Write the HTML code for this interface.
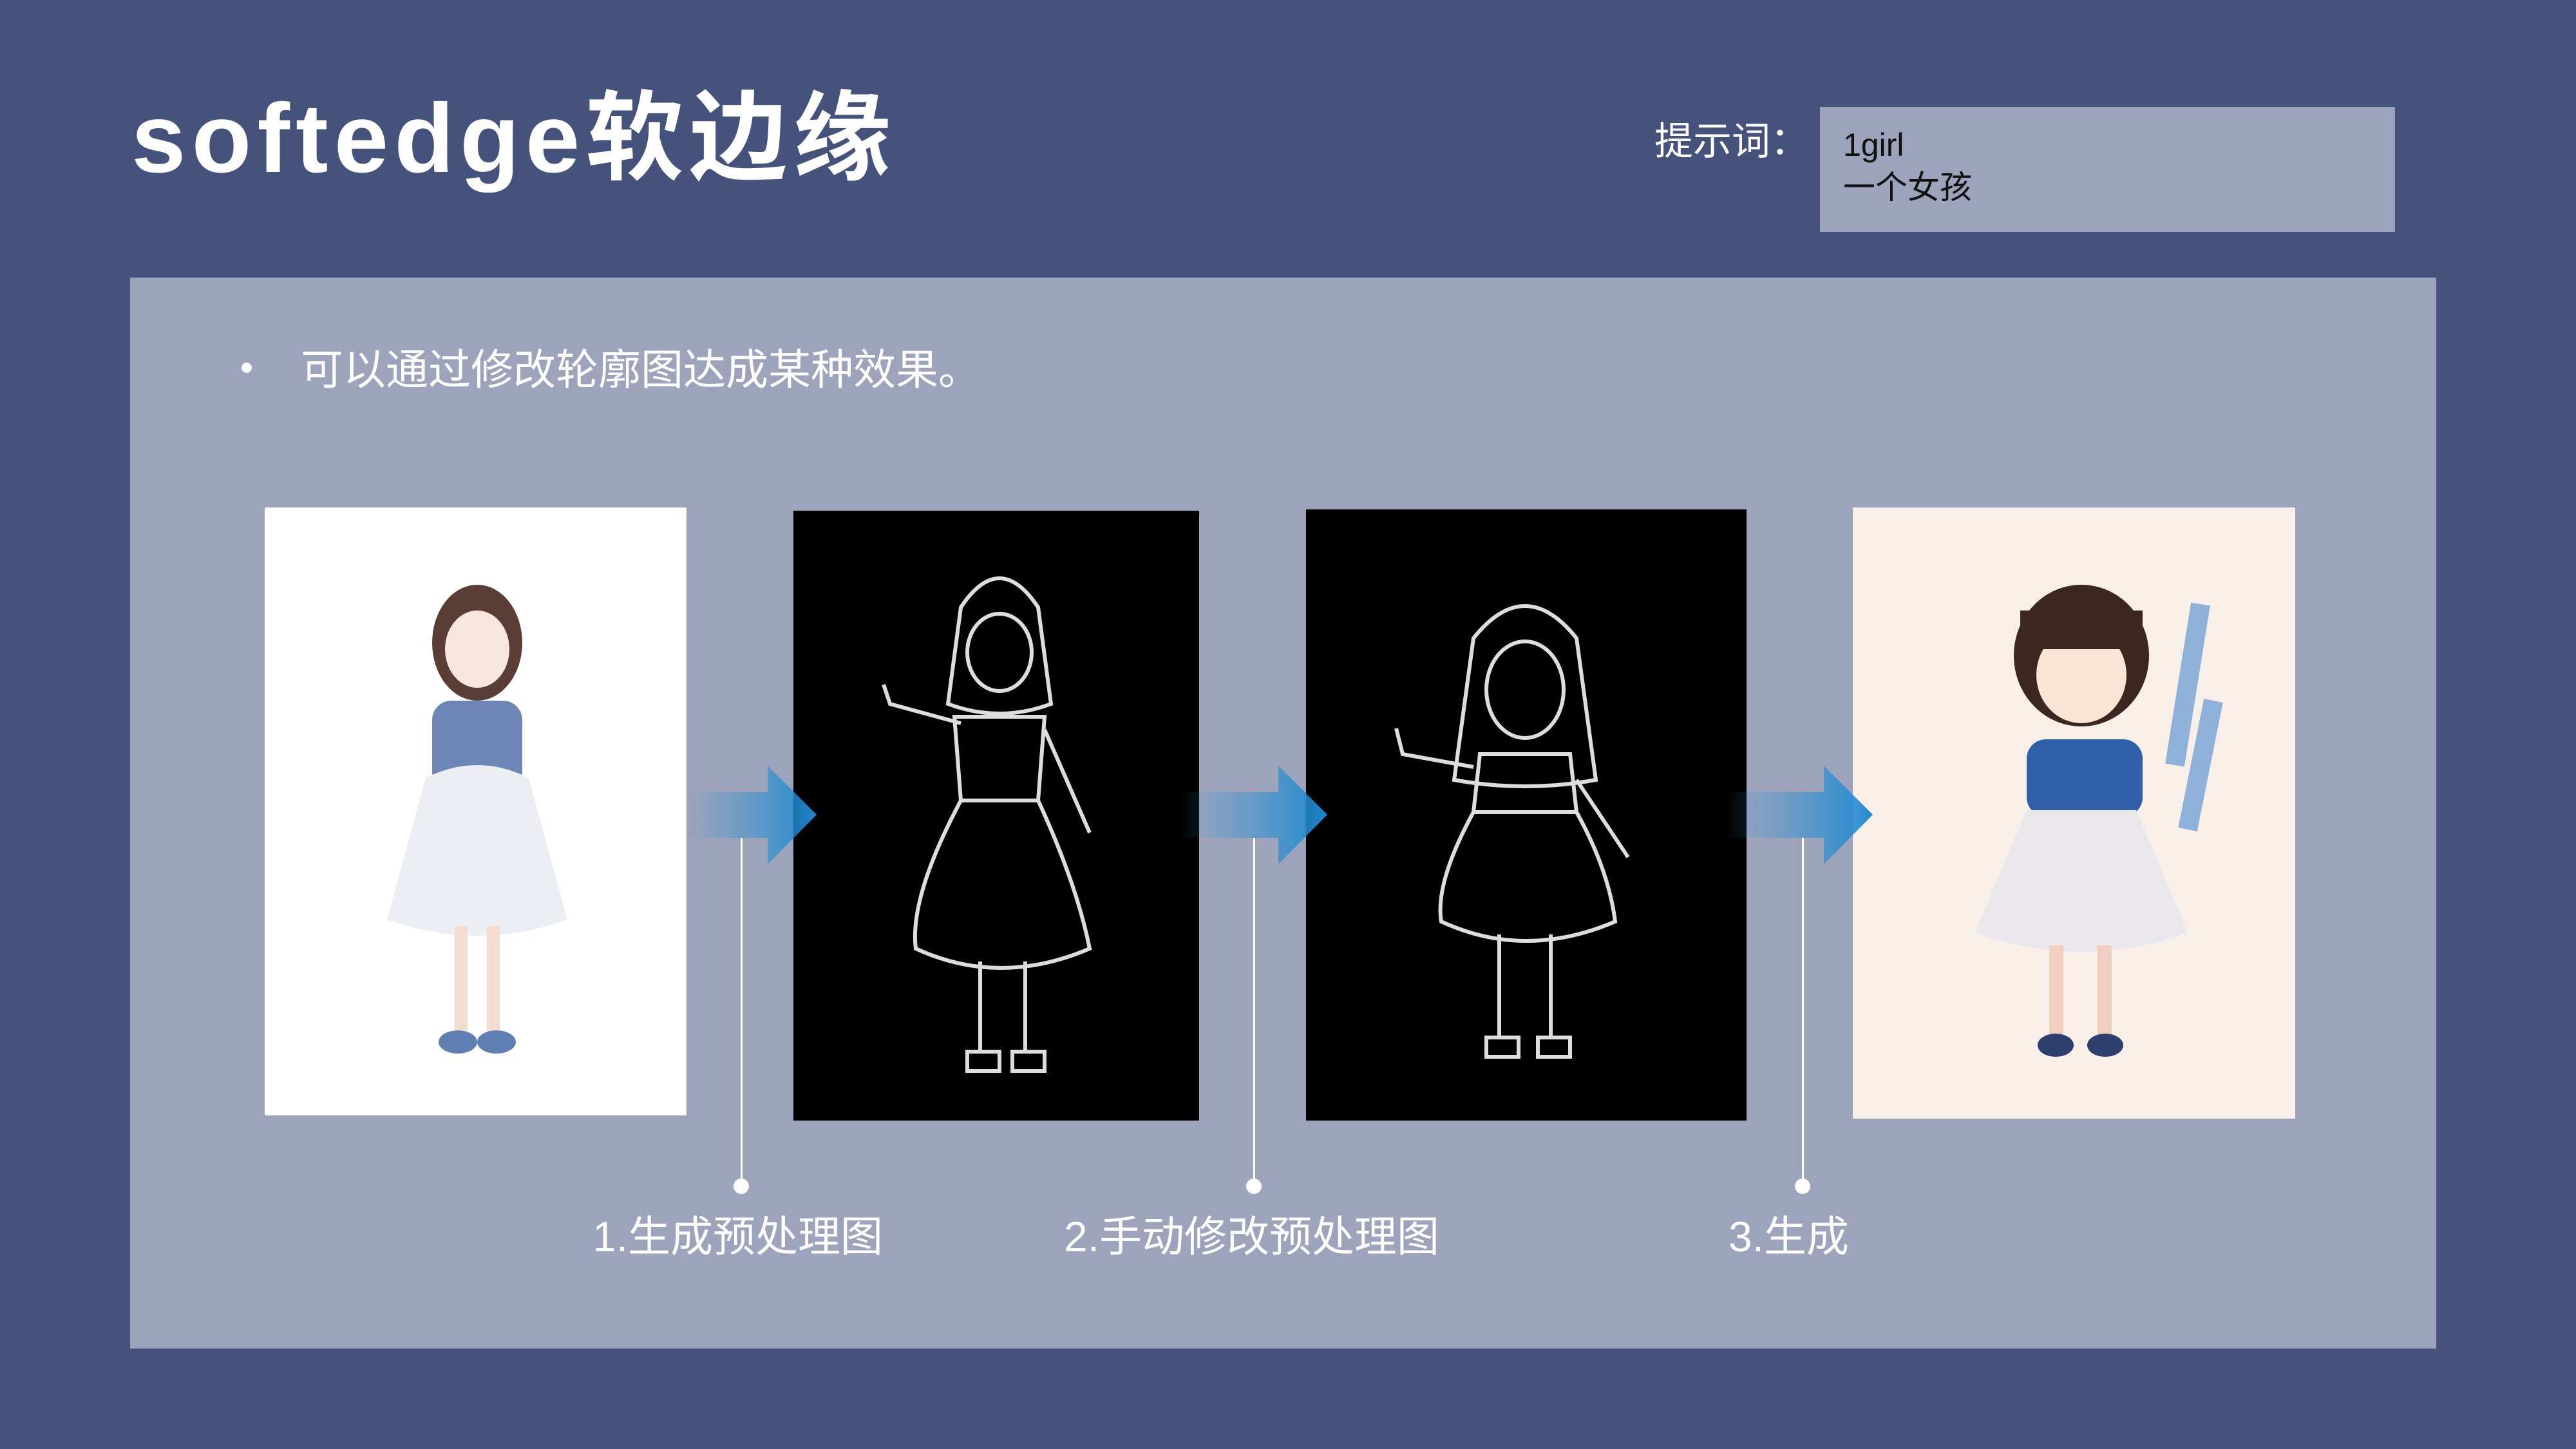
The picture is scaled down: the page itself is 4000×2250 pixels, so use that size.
<!DOCTYPE html>
<html><head><meta charset="utf-8"><style>
*{margin:0;padding:0;box-sizing:border-box}
body{width:4000px;height:2250px;background:#45527b;position:relative;overflow:hidden;font-family:"Liberation Sans","Noto Sans CJK SC",sans-serif}
.abs{position:absolute}
.title{left:204px;top:120px;font-size:152px;font-weight:bold;color:#fff;letter-spacing:9px;line-height:190px;white-space:nowrap}
.panel{left:202px;top:431px;width:3581px;height:1663px;background:#9da3ba}
.lbl{color:#fff;font-size:66px;white-space:nowrap;line-height:80px}
.vl{width:3px;background:#fff;top:1301px;height:540px}
.dot{width:24px;height:24px;border-radius:50%;background:#fff;top:1830px}
</style></head><body>
<div class="abs title">softedge软边缘</div>
<div class="abs" style="left:2569px;top:180px;font-size:60px;color:#fff;line-height:80px">提示词：</div>
<div class="abs" style="left:2826px;top:166px;width:893px;height:194px;background:#9da3ba"></div>
<div class="abs" style="left:2862px;top:192px;font-size:50px;color:#111;line-height:66px">1girl<br>一个女孩</div>
<div class="abs panel"></div>
<div class="abs" style="left:375px;top:563px;width:16px;height:16px;border-radius:50%;background:#fff"></div>
<div class="abs lbl" style="left:467px;top:534px">可以通过修改轮廓图达成某种效果。</div>

<svg class="abs" style="left:411px;top:788px" width="655" height="944" viewBox="0 0 655 944">
<rect width="655" height="944" fill="#fff"/>
<ellipse cx="330" cy="210" rx="70" ry="90" fill="#5a3e35"/>
<ellipse cx="330" cy="220" rx="50" ry="60" fill="#f6e6dc"/>
<rect x="260" y="300" width="140" height="140" rx="30" fill="#6d86b6"/>
<path d="M250 420 Q330 380 410 420 L470 640 Q330 690 190 640Z" fill="#eceef4"/>
<rect x="295" y="650" width="20" height="190" fill="#f3dcd0"/><rect x="345" y="650" width="20" height="190" fill="#f3dcd0"/>
<ellipse cx="300" cy="830" rx="30" ry="18" fill="#5f7fb3"/><ellipse cx="360" cy="830" rx="30" ry="18" fill="#5f7fb3"/>
</svg>
<svg class="abs" style="left:1232px;top:793px" width="630" height="947" viewBox="0 0 630 947">
<rect width="630" height="947" fill="#000"/>
<g fill="none" stroke="#ddd" stroke-width="6">
<path d="M260 150 Q320 60 380 150 L400 300 Q320 330 240 300Z"/><ellipse cx="320" cy="220" rx="50" ry="60"/>
<path d="M250 320 L390 320 L380 450 L260 450Z"/><path d="M260 450 Q180 600 190 680 Q320 740 460 680 Q440 580 380 450"/>
<path d="M260 330 L150 300 L140 270"/><path d="M390 340 L460 500"/>
<path d="M290 700 L290 840 M360 700 L360 840"/><path d="M270 840 h50 v30 h-50z M340 840 h50 v30 h-50z"/></g>
</svg>
<svg class="abs" style="left:2028px;top:791px" width="684" height="949" viewBox="0 0 684 949">
<rect width="684" height="949" fill="#000"/>
<g fill="none" stroke="#ddd" stroke-width="6">
<path d="M260 200 Q340 100 420 200 L450 420 Q340 440 230 420Z"/><ellipse cx="340" cy="280" rx="60" ry="75"/>
<path d="M270 380 L410 380 L420 470 L260 470Z"/><path d="M260 470 Q200 580 210 640 Q340 700 480 640 Q470 560 420 470"/>
<path d="M260 400 L150 380 L140 340"/><path d="M420 420 L500 540"/>
<path d="M300 660 L300 820 M380 660 L380 820"/><path d="M280 820 h50 v30 h-50z M360 820 h50 v30 h-50z"/></g>
</svg>
<svg class="abs" style="left:2877px;top:788px" width="687" height="949" viewBox="0 0 687 949">
<rect width="687" height="949" fill="#f8efe9"/>
<path d="M540 150 L500 400 M560 300 L520 500" stroke="#8fb0d8" stroke-width="30"/>
<ellipse cx="355" cy="230" rx="105" ry="110" fill="#3d2620"/>
<ellipse cx="355" cy="260" rx="70" ry="75" fill="#fbe3d6"/>
<rect x="260" y="160" width="190" height="60" fill="#3d2620"/>
<rect x="270" y="360" width="180" height="120" rx="30" fill="#2f5fa8"/>
<path d="M270 470 L440 470 L520 660 Q355 720 190 660Z" fill="#e9e7ec"/>
<rect x="305" y="680" width="22" height="150" fill="#f1cfc0"/><rect x="380" y="680" width="22" height="150" fill="#f1cfc0"/>
<ellipse cx="315" cy="835" rx="28" ry="18" fill="#2d3f6e"/><ellipse cx="392" cy="835" rx="28" ry="18" fill="#2d3f6e"/>
</svg>

<svg class="abs" style="left:0;top:0" width="4000" height="2250">
<defs><linearGradient id="g" x1="0" x2="1"><stop offset="0" stop-color="#3b9ad8" stop-opacity="0"/><stop offset="1" stop-color="#1e88d0"/></linearGradient></defs>
<g fill="url(#g)">
<path d="M1066 1230 H1192 V1189 L1268 1265 L1192 1342 V1301 H1066Z"/>
<path d="M1832 1230 H1985 V1189 L2061 1265 L1985 1342 V1301 H1832Z"/>
<path d="M2679 1230 H2832 V1189 L2908 1265 L2832 1342 V1301 H2679Z"/>
</g></svg>
<div class="abs vl" style="left:1150px"></div><div class="abs dot" style="left:1139px"></div>
<div class="abs vl" style="left:1946px"></div><div class="abs dot" style="left:1935px"></div>
<div class="abs vl" style="left:2798px"></div><div class="abs dot" style="left:2787px"></div>
<div class="abs lbl" style="left:920px;top:1880px">1.生成预处理图</div>
<div class="abs lbl" style="left:1652px;top:1880px">2.手动修改预处理图</div>
<div class="abs lbl" style="left:2684px;top:1880px">3.生成</div>
</body></html>
